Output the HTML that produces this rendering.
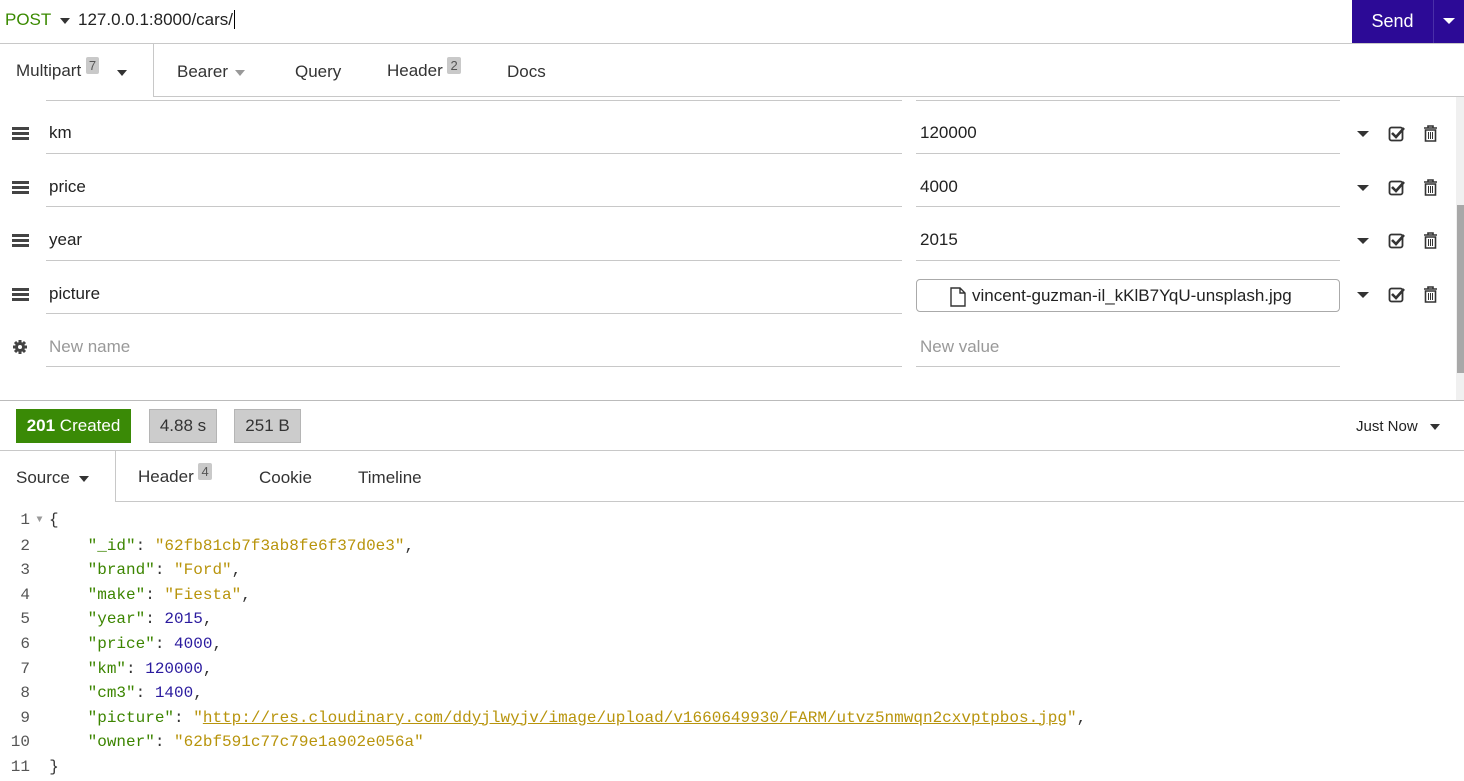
<!DOCTYPE html>
<html><head><meta charset="utf-8"><style>
*{box-sizing:border-box;margin:0;padding:0}
body{width:1464px;height:781px;overflow:hidden;background:#fff;font-family:"Liberation Sans",sans-serif;color:#333;position:relative}
.a{position:absolute}
.tri{display:inline-block;width:0;height:0;border-left:5px solid transparent;border-right:5px solid transparent;border-top:6px solid #333}
.badge{display:inline-block;background:#c9c9c9;color:#555;font-size:13px;padding:1px 3px;border-radius:2px;position:relative;top:-6px}
.tab{font-size:17px;color:#333}
.uline{border-bottom:1px solid #c8c8c8}
.row{font-size:17px;color:#222}
.code{font-family:"Liberation Mono",monospace;font-size:16px;line-height:24.6px;white-space:pre}
.k{color:#3c8500}.s{color:#b8940c}.n{color:#2a1a9e}.p{color:#333}
.ln{color:#555;text-align:right;width:30px;display:inline-block}
</style></head><body>
<div class="a" style="left:5px;top:10px;font-size:17px;color:#3a8a00">POST</div>
<div class="a tri" style="left:60px;top:18px"></div>
<div class="a" style="left:78px;top:10px;font-size:17px;color:#222">127.0.0.1:8000/cars/<span style="border-left:1px solid #000;margin-left:1px"></span></div>
<div class="a" style="left:1352px;top:0;width:81px;height:44px;background:#2c0a96;color:#fff;font-size:18px;text-align:center;line-height:42px">Send</div>
<div class="a" style="left:1433px;top:0;width:31px;height:44px;background:#2c0a96;border-left:1px solid #4a2fa8"></div>
<div class="a" style="left:1443px;top:18px;border-left:6px solid transparent;border-right:6px solid transparent;border-top:6px solid #fff;width:0;height:0"></div>
<div class="a" style="left:0;top:43px;width:1464px;border-top:1px solid #c8c8c8"></div>
<div class="a" style="left:153px;top:44px;height:53px;border-left:1px solid #c8c8c8"></div>
<div class="a" style="left:153px;top:96px;width:1311px;border-top:1px solid #c8c8c8"></div>
<div class="a tab" style="left:16px;top:61px">Multipart <span class="badge">7</span></div>
<div class="a tri" style="left:117px;top:70px"></div>
<div class="a tab" style="left:177px;top:62px">Bearer</div>
<div class="a" style="left:235px;top:70px;border-left:5px solid transparent;border-right:5px solid transparent;border-top:6px solid #999;width:0;height:0"></div>
<div class="a tab" style="left:295px;top:62px">Query</div>
<div class="a tab" style="left:387px;top:61px">Header <span class="badge">2</span></div>
<div class="a tab" style="left:507px;top:62px">Docs</div>
<div class="a" style="left:1456px;top:97px;width:8px;height:303px;background:#f0f0f0"></div>
<div class="a" style="left:1457px;top:205px;width:7px;height:168px;background:#a8a8a8"></div>
<div class="a uline" style="left:46px;top:100px;width:856px"></div>
<div class="a uline" style="left:916px;top:100px;width:424px"></div>
<div class="a uline" style="left:46px;top:153px;width:856px"></div>
<div class="a uline" style="left:916px;top:153px;width:424px"></div>
<div class="a uline" style="left:46px;top:206px;width:856px"></div>
<div class="a uline" style="left:916px;top:206px;width:424px"></div>
<div class="a uline" style="left:46px;top:260px;width:856px"></div>
<div class="a uline" style="left:916px;top:260px;width:424px"></div>
<div class="a uline" style="left:46px;top:313px;width:856px"></div>
<div class="a uline" style="left:46px;top:366px;width:856px"></div>
<div class="a uline" style="left:916px;top:366px;width:424px"></div>
<div class="a row" style="left:49px;top:123px">km</div>
<div class="a row" style="left:920px;top:123px">120000</div>
<div class="a row" style="left:49px;top:177px">price</div>
<div class="a row" style="left:920px;top:177px">4000</div>
<div class="a row" style="left:49px;top:230px">year</div>
<div class="a row" style="left:920px;top:230px">2015</div>
<div class="a row" style="left:49px;top:284px">picture</div>
<div class="a" style="left:916px;top:279px;width:424px;height:33px;border:1px solid #aaa;border-radius:4px"></div>
<svg class="a" style="left:949px;top:287px" width="18" height="20" viewBox="0 0 18 20"><path d="M2 1h9l5 5v13H2z M11 1v5h5" fill="none" stroke="#333" stroke-width="1.4"/></svg>
<div class="a row" style="left:972px;top:286px">vincent-guzman-il_kKlB7YqU-unsplash.jpg</div>
<div class="a row" style="left:49px;top:337px;color:#999">New name</div>
<div class="a row" style="left:920px;top:337px;color:#999">New value</div>
<svg class="a" style="left:0;top:0" width="1464" height="400">
<g fill="#444">
<rect x="12" y="127" width="17" height="3"/><rect x="12" y="132" width="17" height="3"/><rect x="12" y="137" width="17" height="3"/>
<rect x="12" y="181" width="17" height="3"/><rect x="12" y="186" width="17" height="3"/><rect x="12" y="191" width="17" height="3"/>
<rect x="12" y="234" width="17" height="3"/><rect x="12" y="239" width="17" height="3"/><rect x="12" y="244" width="17" height="3"/>
<rect x="12" y="288" width="17" height="3"/><rect x="12" y="293" width="17" height="3"/><rect x="12" y="298" width="17" height="3"/>
</g>
<g transform="translate(20,347)" fill="#444"><circle r="5"/><g stroke="#444" stroke-width="3"><line x1="-7" y1="0" x2="7" y2="0"/><line x1="0" y1="-7" x2="0" y2="7"/><line x1="-5" y1="-5" x2="5" y2="5"/><line x1="-5" y1="5" x2="5" y2="-5"/></g><circle r="2" fill="#fff"/></g>
<g id="ic">
<path d="M1357 131h12l-6 6z" fill="#333"/>
<rect x="1389.5" y="127.5" width="13" height="13" rx="2" fill="none" stroke="#333" stroke-width="1.8"/>
<path d="M1392 133l4 4l8-9" fill="none" stroke="#333" stroke-width="2.6"/>
<path d="M1424 128h13M1428 128v-2h5v2M1425.5 130h10v11h-10z" fill="none" stroke="#333" stroke-width="1.6"/>
<path d="M1428.5 132v7M1430.5 132v7M1432.5 132v7" stroke="#333" stroke-width="1"/>
</g>
<use href="#ic" y="54"/><use href="#ic" y="107"/><use href="#ic" y="161"/>
</svg>
<div class="a" style="left:0;top:400px;width:1464px;border-top:1px solid #bbb"></div>
<div class="a" style="left:16px;top:409px;width:115px;height:34px;background:#3a8a06;color:#fff;font-size:17px;line-height:34px;text-align:center"><b>201</b> Created</div>
<div class="a" style="left:149px;top:409px;width:68px;height:34px;background:#ccc;border:1px solid #b5b5b5;color:#333;font-size:17px;line-height:32px;text-align:center">4.88 s</div>
<div class="a" style="left:234px;top:409px;width:67px;height:34px;background:#ccc;border:1px solid #b5b5b5;color:#333;font-size:17px;line-height:32px;text-align:center">251 B</div>
<div class="a" style="left:1356px;top:418px;font-size:15px;color:#222">Just Now</div>
<div class="a tri" style="left:1430px;top:424px"></div>
<div class="a" style="left:0;top:450px;width:1464px;border-top:1px solid #c8c8c8"></div>
<div class="a" style="left:115px;top:451px;height:51px;border-left:1px solid #c8c8c8"></div>
<div class="a" style="left:115px;top:501px;width:1349px;border-top:1px solid #c8c8c8"></div>
<div class="a tab" style="left:16px;top:468px">Source</div>
<div class="a tri" style="left:79px;top:476px"></div>
<div class="a tab" style="left:138px;top:467px">Header <span class="badge">4</span></div>
<div class="a tab" style="left:259px;top:468px">Cookie</div>
<div class="a tab" style="left:358px;top:468px">Timeline</div>
<div class="a code" style="left:0;top:508px"><span class="ln">1</span><span style="color:#999;font-size:10px;display:inline-block;width:19px;text-align:center;vertical-align:2px">▼</span><span class="p">{</span>
<span class="ln">2</span>      <span class="k">"_id"</span>: <span class="s">"62fb81cb7f3ab8fe6f37d0e3"</span>,
<span class="ln">3</span>      <span class="k">"brand"</span>: <span class="s">"Ford"</span>,
<span class="ln">4</span>      <span class="k">"make"</span>: <span class="s">"Fiesta"</span>,
<span class="ln">5</span>      <span class="k">"year"</span>: <span class="n">2015</span>,
<span class="ln">6</span>      <span class="k">"price"</span>: <span class="n">4000</span>,
<span class="ln">7</span>      <span class="k">"km"</span>: <span class="n">120000</span>,
<span class="ln">8</span>      <span class="k">"cm3"</span>: <span class="n">1400</span>,
<span class="ln">9</span>      <span class="k">"picture"</span>: <span class="s">"<u>http://res.cloudinary.com/ddyjlwyjv/image/upload/v1660649930/FARM/utvz5nmwqn2cxvptpbos.jpg</u>"</span>,
<span class="ln">10</span>      <span class="k">"owner"</span>: <span class="s">"62bf591c77c79e1a902e056a"</span>
<span class="ln">11</span>  }</div>
</body></html>
